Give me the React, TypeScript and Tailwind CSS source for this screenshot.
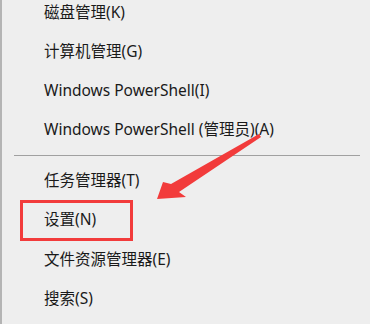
import React from "react";

const topItems = [
  "磁盘管理(K)",
  "计算机管理(G)",
  "Windows PowerShell(I)",
  "Windows PowerShell (管理员)(A)",
];

const bottomItems = ["任务管理器(T)", "设置(N)", "文件资源管理器(E)", "搜索(S)"];

const font = {
  fontFamily: '"Noto Sans", "Noto Sans CJK SC", sans-serif',
};

const App: React.FC = () => {
  return (
    <div
      className="relative w-[370px] h-[324px] overflow-hidden bg-[#eeeeee] border-l-2 border-[#b4b4b4]"
      style={font}
    >
      {/* top group */}
      <div className="flex flex-col -ml-[2px] -mt-[7.5px]">
        {topItems.map((t) => (
          <div
            key={t}
            className="flex items-center h-[39.3px] pl-[44px] text-[15.5px] text-[#1a1a1a]"
          >
            {t}
          </div>
        ))}
      </div>

      {/* separator */}
      <div className="ml-[12px] mr-[10px] mt-[5px] h-px bg-[#a0a0a0]" />

      {/* bottom group */}
      <div className="flex flex-col -ml-[2px] mt-[5px]">
        {bottomItems.map((t) => (
          <div
            key={t}
            className="flex items-center h-[39.5px] pl-[44px] text-[15.5px] text-[#1a1a1a]"
          >
            {t}
          </div>
        ))}
      </div>

      {/* highlight box around 设置 */}
      <div className="absolute left-[18px] top-[200px] w-[113px] h-[41px] border-[3px] border-[#f23b3b]" />

      {/* annotation arrow */}
      <svg
        className="absolute left-0 top-0"
        width="370"
        height="324"
        viewBox="0 0 370 324"
      >
        <polygon
          points="155,199 161,182 169,184 257,134 259,137 177,192 184,197"
          fill="#f23b3b"
        />
      </svg>
    </div>
  );
};

export default App;
